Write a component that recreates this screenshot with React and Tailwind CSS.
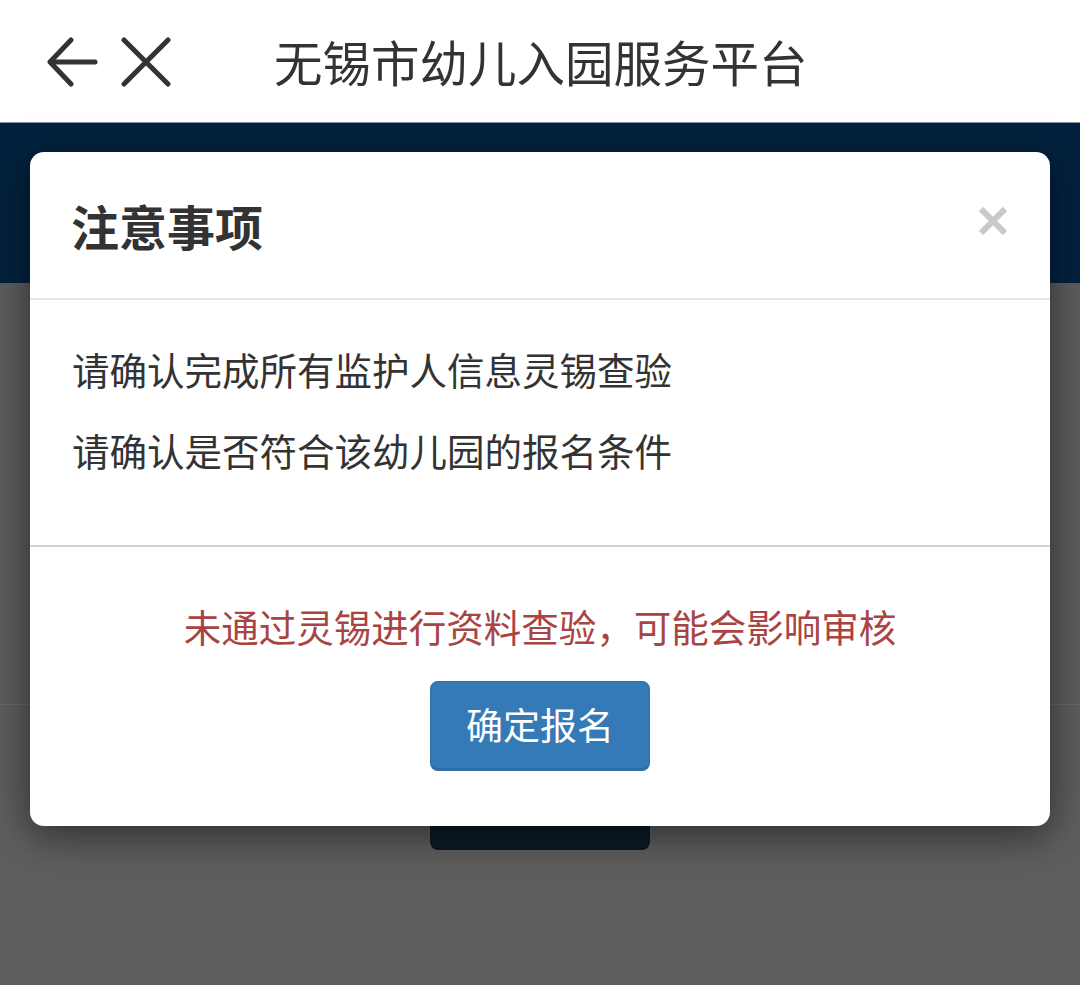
const font = { fontFamily: '"Noto Sans CJK SC", "Noto Sans", sans-serif' };

const BackIcon = () => (
  <svg width="52" height="52" viewBox="0 0 52 52" fill="none" stroke="#333" strokeWidth="5" strokeLinecap="round" strokeLinejoin="round">
    <path d="M48 26H4" />
    <path d="M24 4L3 26l21 22" />
  </svg>
);

const CloseIcon = () => (
  <svg width="50" height="50" viewBox="0 0 50 50" fill="none" stroke="#333" strokeWidth="5" strokeLinecap="round">
    <path d="M3 3l44 44M47 3L3 47" />
  </svg>
);

const ModalClose = () => (
  <svg width="28" height="28" viewBox="0 0 28 28" fill="none" stroke="#c9c9c9" strokeWidth="6">
    <path d="M2 2l24 24M26 2L2 26" />
  </svg>
);

export default function App() {
  return (
    <div className="relative w-[1080px] h-[985px] overflow-hidden bg-[#5e5e5e]" style={font}>
      {/* top bar */}
      <div className="h-[123px] bg-white flex items-center border-b border-[#8a97a3]">
        <div className="flex items-center gap-[22px] pl-[47px] pt-[1px]">
          <BackIcon />
          <CloseIcon />
        </div>
        <h1 className="ml-[103px] text-[48.5px] leading-none text-[#333]">无锡市幼儿入园服务平台</h1>
      </div>

      {/* page behind overlay */}
      <div className="h-[160px] bg-[#03223f]" />
      <div className="h-[422px] border-b border-[#6a6a6a]" />
      <div className="flex justify-center">
        <div className="w-[220px] h-[146px] -mt-[1px] rounded-b-[8px] bg-[#0b1a28]" />
      </div>

      {/* modal */}
      <div className="absolute left-[30px] top-[152px] w-[1020px] h-[674px] bg-white rounded-[14px] shadow-[0_8px_40px_rgba(0,0,0,0.55)] flex flex-col">
        <div className="h-[148px] flex items-center justify-between pl-[41px] pr-[43px] border-b-2 border-[#e5e5e5]">
          <h2 className="text-[48px] font-semibold leading-none text-[#333]">注意事项</h2>
          <div className="-mt-[8px]">
            <ModalClose />
          </div>
        </div>
        <div className="h-[245px] pl-[42px] pt-[50px] text-[37.5px] leading-none text-[#333] flex flex-col gap-[43.5px]">
          <p>请确认完成所有监护人信息灵锡查验</p>
          <p>请确认是否符合该幼儿园的报名条件</p>
        </div>
        <div className="flex-1 border-t-2 border-[#d2d2d2] flex flex-col items-center">
          <p className="mt-[60px] text-[37.5px] leading-none text-[#a94442]">未通过灵锡进行资料查验，可能会影响审核</p>
          <button className="mt-[36px] w-[220px] h-[90px] rounded-[8px] bg-[#337ab7] border border-[#2e6da4] border-b-[3px] text-white text-[37px] leading-none" style={font}>
            确定报名
          </button>
        </div>
      </div>
    </div>
  );
}
